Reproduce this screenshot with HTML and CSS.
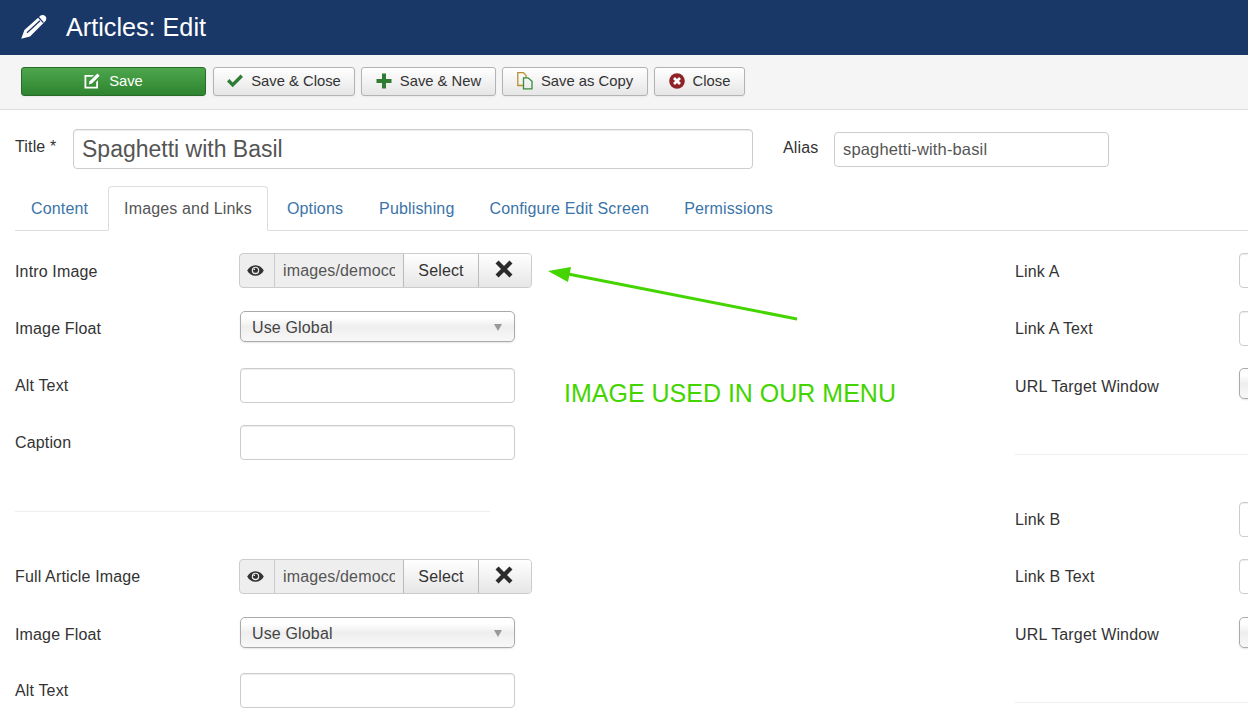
FILE: index.html
```html
<!DOCTYPE html>
<html lang="en">
<head>
    <meta charset="UTF-8">
    <title>Articles: Edit</title>
    <link rel="stylesheet" href="styles.css">
</head>
<body>
    <header class="topbar">
        <svg class="pencil" viewBox="0 0 28 28" width="28" height="28"><path fill="#fff" d="M1.200 25.800L4.400 17 19.500 3.400c1.800-1.700 4.100-1.900 5.700-.3 1.600 1.600 1.500 3.800-.2 5.500L10 23.400z"/><path fill="none" stroke="#1a3867" stroke-width="1.300" d="M7 19.800L20 7.800M18 3.800l5.400 5.800"/></svg>
        <h1>Articles: Edit</h1>
    </header>

    <div class="toolbar">
        <button class="btn btn-save">
            <svg class="icon" viewBox="0 0 16 16" width="16" height="16"><path fill="#fff" d="M.5 2h9.500L8.200 3.800H2.300v9.900h9.900V9l1.800-1.800v8.300H.5z"/><path fill="#fff" d="M13.400.5l2.300 2.300-7.800 7.800-3.100.8.800-3.100z"/></svg>
            <span class="save-text">Save</span>
        </button>
        <button class="btn btn-close-save">
            <svg class="icon" viewBox="0 0 16 16" width="16" height="16"><path fill="#2f7d32" d="M0 8.500l2.400-2.400 3.300 3.300 7.900-7.900L16 3.900 5.700 14.200z"/></svg>
            Save &amp; Close
        </button>
        <button class="btn btn-new">
            <svg class="icon" viewBox="0 0 16 16" width="16" height="16"><path fill="#2f7d32" d="M6 .5h4v5.500h5.500v4H10v5.500H6V10H.5V6H6z"/></svg>
            Save &amp; New
        </button>
        <button class="btn btn-copy">
            <svg class="icon" viewBox="0 -2 16 18" width="16" height="18"><path fill="none" stroke="#b8902e" stroke-width="1.300" d="M6 11.500H.8V-1.400h5.500l2.800 2.800v2.600"/><path fill="none" stroke="#3a8a3a" stroke-width="1.300" d="M6.500 3.800h4.500l4 3.500v7.500H6.500z"/></svg>
            Save as Copy
        </button>
        <button class="btn btn-close">
            <svg class="icon" viewBox="0 0 16 16" width="16" height="16"><circle cx="8" cy="8" r="7.800" fill="#8f2226"/><path fill="none" stroke="#fff" stroke-width="2.800" d="M5 5l6 6M11 5l-6 6"/></svg>
            Close
        </button>
    </div>

    <main class="content">
        <div class="title-row">
            <label class="title-label">Title *</label>
            <input class="title-input" type="text" value="Spaghetti with Basil">
            <label class="alias-label">Alias</label>
            <input class="alias-input" type="text" value="spaghetti-with-basil">
        </div>

        <ul class="tabs">
            <li>Content</li>
            <li class="active">Images and Links</li>
            <li class="tab-wide">Options</li>
            <li>Publishing</li>
            <li>Configure Edit Screen</li>
            <li>Permissions</li>
        </ul>

        <div class="columns">
            <section class="col-left">
                <div class="row row-media">
                    <label class="label-low">Intro Image</label>
                    <div class="media">
                        <span class="media-eye">
                            <svg viewBox="0 0 16 12" width="17" height="13"><path fill="#333" d="M8 1C4.500 1 1.700 3.100.2 6 1.700 8.900 4.500 11 8 11s6.300-2.100 7.800-5C14.300 3.100 11.500 1 8 1zm0 8.500A3.500 3.500 0 1 1 8 2.500a3.500 3.500 0 0 1 0 7z"/><circle cx="8" cy="5.800" r="2.400" fill="#333"/><circle cx="6.800" cy="4.800" r=".8" fill="#eee"/></svg>
                        </span>
                        <input class="media-path" type="text" readonly value="images/democontent/spaghetti.jpg">
                        <span class="media-btn select">Select</span>
                        <span class="media-btn clear">
                            <svg viewBox="0 0 16 16" width="18" height="18"><path fill="none" stroke="#2b2b2b" stroke-width="3.800" d="M1.800 1.800l12.400 12.400M14.200 1.800L1.800 14.200"/></svg>
                        </span>
                    </div>
                </div>
                <div class="row">
                    <label>Image Float</label>
                    <div class="select-box">Use Global<span class="caret"></span></div>
                </div>
                <div class="row">
                    <label>Alt Text</label>
                    <input class="text-input" type="text">
                </div>
                <div class="row">
                    <label>Caption</label>
                    <input class="text-input" type="text">
                </div>

                <hr class="divider left-divider">

                <div class="row row-media">
                    <label>Full Article Image</label>
                    <div class="media">
                        <span class="media-eye">
                            <svg viewBox="0 0 16 12" width="17" height="13"><path fill="#333" d="M8 1C4.500 1 1.700 3.100.2 6 1.700 8.900 4.500 11 8 11s6.300-2.100 7.800-5C14.300 3.100 11.500 1 8 1zm0 8.500A3.500 3.500 0 1 1 8 2.500a3.500 3.500 0 0 1 0 7z"/><circle cx="8" cy="5.800" r="2.400" fill="#333"/><circle cx="6.800" cy="4.800" r=".8" fill="#eee"/></svg>
                        </span>
                        <input class="media-path" type="text" readonly value="images/democontent/spaghetti.jpg">
                        <span class="media-btn select">Select</span>
                        <span class="media-btn clear">
                            <svg viewBox="0 0 16 16" width="18" height="18"><path fill="none" stroke="#2b2b2b" stroke-width="3.800" d="M1.800 1.800l12.400 12.400M14.200 1.800L1.800 14.200"/></svg>
                        </span>
                    </div>
                </div>
                <div class="row row-tight">
                    <label>Image Float</label>
                    <div class="select-box">Use Global<span class="caret"></span></div>
                </div>
                <div class="row">
                    <label>Alt Text</label>
                    <input class="text-input" type="text">
                </div>
            </section>

            <section class="col-right">
                <div class="row row-media">
                    <label class="label-low">Link A</label>
                    <input class="text-input" type="text">
                </div>
                <div class="row">
                    <label>Link A Text</label>
                    <input class="text-input" type="text">
                </div>
                <div class="row">
                    <label class="label-low">URL Target Window</label>
                    <div class="select-box"></div>
                </div>
                <hr class="divider right-divider">
                <div class="row">
                    <label>Link B</label>
                    <input class="text-input" type="text">
                </div>
                <div class="row row-media">
                    <label>Link B Text</label>
                    <input class="text-input" type="text">
                </div>
                <div class="row">
                    <label>URL Target Window</label>
                    <div class="select-box"></div>
                </div>
                <hr class="divider last-divider">
            </section>
        </div>
    </main>

    <!-- annotation drawn over the screenshot -->
    <svg class="note-arrow" viewBox="0 0 260 60" width="260" height="60"><path fill="none" stroke="#44d400" stroke-width="3" d="M257 56L28 11"/><path fill="#44d400" d="M8 8l23-4-3 15z"/></svg>
    <div class="note-text">IMAGE USED IN OUR MENU</div>
</body>
</html>
```

FILE: styles.css
```css
html, body {
    height: 710px;
    overflow: hidden;
}
body {
    margin: 0;
    font-family: "Liberation Sans", Arial, sans-serif;
    font-size: 16px;
    letter-spacing: 0.15px;
    color: #333;
    background: #fff;
    position: relative;
}
.topbar {
    height: 55px;
    background: #1a3867;
    display: flex;
    align-items: center;
    padding-left: 20px;
}
.pencil {
    margin-right: 18px;
    margin-top: -2px;
}
.topbar h1 {
    margin: 0;
    font-size: 25.200px;
    font-weight: normal;
    letter-spacing: 0;
    color: #fff;
}
.toolbar {
    height: 42px;
    background: #f5f5f5;
    border-bottom: 1px solid #ddd;
    display: flex;
    gap: 6px;
    padding: 12px 0 0 21px;
    align-items: flex-start;
}
.btn {
    height: 29px;
    display: flex;
    align-items: center;
    justify-content: center;
    gap: 8px;
    padding: 0 0 2px;
    border: 1px solid #b3b3b3;
    border-radius: 3px;
    background: linear-gradient(#fff, #e6e6e6);
    font-family: inherit;
    font-size: 14.800px;
    letter-spacing: 0;
    color: #333;
    box-shadow: 0 1px 2px rgba(0, 0, 0, 0.05);
}
.btn-save {
    width: 185px;
    margin-right: 1px;
    background: linear-gradient(#4ca64c, #2f842f);
    border-color: #2a6b2a;
    color: #fff;
}
.save-text {
    margin-left: 1px;
}
.btn-close-save { width: 142px; }
.btn-new { width: 135px; }
.btn-copy { width: 146px; }
.btn-close { width: 91px; }
.content {
    padding: 19px 0 0 15px;
}
.title-row {
    display: flex;
    align-items: center;
    height: 40px;
}
.title-label {
    width: 58px;
    margin-top: -4px;
}
.title-input {
    width: 680px;
    height: 40px;
    box-sizing: border-box;
    padding: 0 8px;
    border: 1px solid #ccc;
    border-radius: 4px;
    font-family: inherit;
    font-size: 23px;
    letter-spacing: 0;
    color: #555;
    box-shadow: inset 0 1px 1px rgba(0, 0, 0, 0.075);
}
.alias-label {
    margin-left: 30px;
    width: 51px;
    margin-top: -3px;
}
.alias-input {
    width: 275px;
    height: 35px;
    box-sizing: border-box;
    margin-top: 1px;
    padding: 0 8px;
    border: 1px solid #ccc;
    border-radius: 4px;
    font-family: inherit;
    font-size: 16.500px;
    letter-spacing: 0.15px;
    color: #555;
}
.tabs {
    list-style: none;
    margin: 17px 0 0;
    padding: 0;
    height: 45px;
    box-sizing: border-box;
    display: flex;
    border-bottom: 1px solid #ddd;
}
.tabs li {
    padding: 0 15px;
    height: 45px;
    box-sizing: border-box;
    line-height: 44px;
    color: #3b74a8;
    border: 1px solid transparent;
    margin-right: 3px;
}
.tabs li:first-child {
    margin-right: 4px;
}
.tabs .tab-wide {
    margin-right: 4px;
}
.tabs .active {
    color: #555;
    background: #fff;
    border-color: #ddd;
    border-bottom-color: #fff;
    border-radius: 4px 4px 0 0;
}
.columns {
    display: flex;
    padding-top: 22px;
}
.col-left {
    width: 1000px;
    flex-shrink: 0;
}
.col-right {
    width: 233px;
    flex-shrink: 0;
    overflow: hidden;
}
.row {
    display: flex;
    align-items: center;
    height: 35px;
    margin-bottom: 22px;
}
.row label {
    width: 225px;
    flex-shrink: 0;
}
.row .label-low {
    padding-top: 2px;
}
.col-right .row label {
    width: 224px;
}
.row-media {
    margin-bottom: 23px;
}
.row-tight {
    margin-bottom: 21px;
}
.media {
    display: flex;
    width: 293px;
    height: 35px;
    margin-left: -1px;
    box-sizing: border-box;
    border: 1px solid #ccc;
    border-radius: 4px;
    overflow: hidden;
    background: #eee;
}
.media-eye {
    width: 35px;
    flex-shrink: 0;
    display: flex;
    align-items: center;
    justify-content: center;
    padding-right: 4px;
    border-right: 1px solid #ccc;
    box-sizing: border-box;
}
.media-path {
    width: 128px;
    flex-shrink: 0;
    padding: 0 8px;
    box-sizing: border-box;
    border: 0;
    background: #eee;
    font-family: inherit;
    font-size: 16px;
    letter-spacing: 0.15px;
    color: #555;
}
.media-btn {
    display: flex;
    align-items: center;
    justify-content: center;
    background: linear-gradient(#fff, #e6e6e6);
    border-left: 1px solid #bbb;
    box-sizing: border-box;
}
.select {
    width: 75px;
}
.clear {
    flex: 1;
    padding: 0 2px 3px 0;
}
.select-box {
    align-self: flex-start;
    position: relative;
    width: 275px;
    height: 31px;
    flex-shrink: 0;
    box-sizing: border-box;
    padding-left: 11px;
    line-height: 32px;
    border: 1px solid #aaa;
    border-radius: 5px;
    background: linear-gradient(#fff 20%, #eee 50%, #f8f8f8);
    color: #444;
    box-shadow: 0 1px 2px rgba(0, 0, 0, 0.1);
}
.caret {
    position: absolute;
    right: 12px;
    top: 12px;
    border-left: 4px solid transparent;
    border-right: 4px solid transparent;
    border-top: 7px solid #999;
}
.text-input {
    width: 275px;
    height: 35px;
    flex-shrink: 0;
    box-sizing: border-box;
    border: 1px solid #ccc;
    border-radius: 4px;
    box-shadow: inset 0 1px 1px rgba(0, 0, 0, 0.075);
}
.divider {
    border: 0;
    border-top: 1px solid #eee;
    margin: 0;
}
.left-divider {
    width: 475px;
    margin: 51px 0 47px;
}
.right-divider {
    margin: 51px 0 47px;
}
.last-divider {
    margin-top: 50px;
}
.note-arrow {
    position: absolute;
    left: 540px;
    top: 263px;
}
.note-text {
    position: absolute;
    left: 564px;
    top: 379px;
    font-size: 25px;
    letter-spacing: 0;
    color: #44d400;
}
```
